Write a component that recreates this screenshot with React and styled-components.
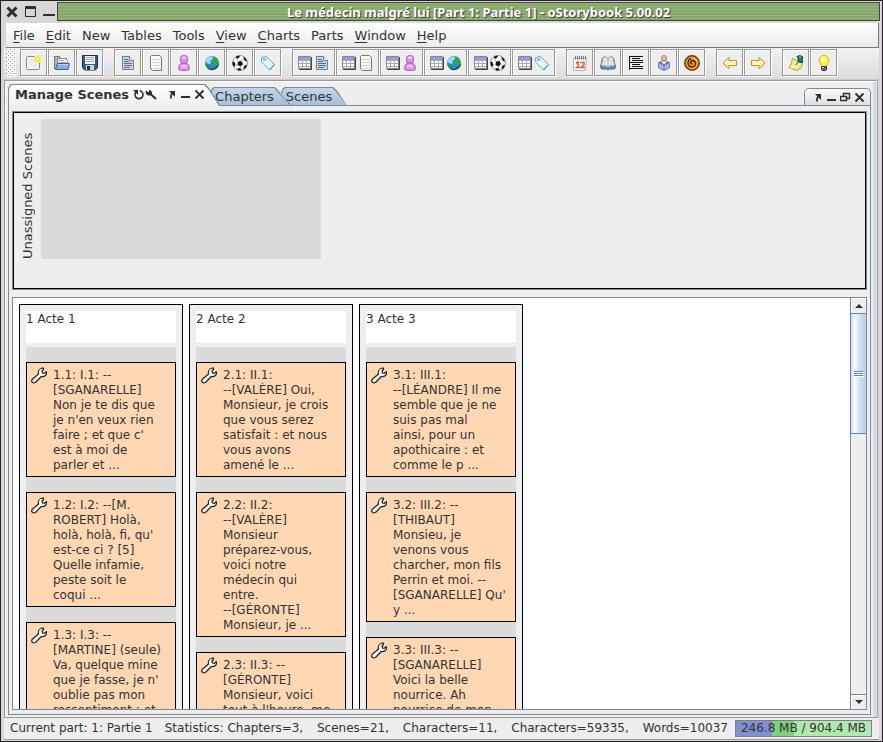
import React from "react";
import styled, { createGlobalStyle } from "styled-components";

const GlobalStyle = createGlobalStyle`
  * { box-sizing: border-box; }
  body { margin: 0; background: #d6d6d6; }
  body, button { font-family: "DejaVu Sans", sans-serif; font-size: 13px; line-height: 15px; color: #333; }
  button { margin: 0; padding: 0; border: 0; background: none; }
  h2 { margin: 0; }
  svg { display: block; flex: none; }
`;

const EDGE = "#7a8a99";

const Frame = styled.div`
  height: 100vh;
  display: flex;
  flex-direction: column;
  border: 1px solid #231f24;
  padding: 1px 3px 1px 3px;
  background: #d8d6d8;
  overflow: hidden;
`;
const TitleBar = styled.header`
  flex: none;
  display: flex;
  height: 19px;
  gap: 2px;
  margin-right: -1px;
`;
const WindowButtons = styled.div`
  display: flex;
  align-items: center;
  width: 51px;
  gap: 7px;
  padding-left: 2px;
`;
const Title = styled.h1`
  flex: 1;
  margin: 0;
  padding-left: 20px;
  border: 1px solid #3c4a30;
  background: repeating-linear-gradient(#96b67a 0 1px, #87a66d 1px 3px);
  color: #fff;
  font: bold 13px/18px "Noto Sans", sans-serif;
  text-align: center;
  text-shadow: 1px 1px 1px #333;
  white-space: nowrap;
  overflow: hidden;
`;
const MenuBar = styled.nav`
  flex: none;
  display: flex;
  gap: 11px;
  height: 25px;
  margin: 2px 0 0 2px;
  padding: 4px 0 0 7px;
  background: linear-gradient(#fff, #eaeaea);
  border-bottom: 1px solid #777;
  border-right: 1px solid #777;
`;
const MenuButton = styled.button`
  height: 16px;
  u { text-underline-offset: 2px; text-decoration-thickness: 1px; }
`;
const ToolBar = styled.div`
  flex: none;
  display: flex;
  gap: 11px;
  height: 32px;
  padding: 1px 0 0 2px;
  border-bottom: 1px solid #c8c8c8;
  background: linear-gradient(#f2f2f2, #dcdcdc);
`;
const Grip = styled.div`
  width: 10px;
  margin-right: -7px;
  height: 28px;
  background:
    conic-gradient(from 270deg at 1px 1px, #8a97a5 25%, transparent 0) 0 0 / 4px 4px,
    conic-gradient(from 270deg at 1px 1px, #8a97a5 25%, transparent 0) 2px 2px / 4px 4px,
    #f4f4f4;
`;
const ToolGroup = styled.div`
  display: flex;
  gap: 1px;
`;
const ToolButton = styled.button`
  display: flex;
  align-items: center;
  justify-content: center;
  width: ${(p) => (p.$wide ? 43 : 27)}px;
  height: 27px;
  background: #eee;
  border: 1px solid #999;
  box-shadow: inset 1px 1px #fff, 1px 1px #fff;
`;
const Desk = styled.main`
  flex: 1;
  min-height: 0;
  display: flex;
  flex-direction: column;
  margin: 0 1px 0 0;
  border: 1px solid #999;
  border-right-color: #aaa;
  box-shadow: inset 1px 1px #fff;
  background: linear-gradient(to left, #d3dde6 4px, #eee 4px);
  padding: 3px 6px 2px 3px;
`;
const TabStrip = styled.div`
  flex: none;
  display: flex;
  align-items: flex-end;
  height: 22px;
  margin-bottom: -1px;
`;
const tabShape = (p) =>
  p.$active
    ? "polygon(0 5px, 1px 2px, 3px 0, calc(100% - 15px) 0, calc(100% - 11px) 4px, 100% 100%, 0 100%)"
    : "polygon(0 6px, 2px 1px, 4px 0, calc(100% - 14px) 0, calc(100% - 10px) 4px, 100% 100%, 9px 100%)";
const Tab = styled.div`
  position: relative;
  z-index: ${(p) => p.$order};
  display: flex;
  align-items: center;
  height: ${(p) => (p.$active ? 22 : 19)}px;
  padding: ${(p) => (p.$active ? "0 14px 2px 7px" : "0 15px 0 5px")};
  margin-right: ${(p) => (p.$active ? -10 : -8)}px;
  background: ${EDGE};
  clip-path: ${tabShape};
  &::before {
    content: "";
    position: absolute;
    inset: 1px 1px ${(p) => (p.$active ? 0 : 1)}px 1px;
    background: ${(p) => (p.$active ? "linear-gradient(#fff, #eee)" : "linear-gradient(#bfd6ee, #a9c0d8)")};
    clip-path: ${tabShape};
  }
  > * { position: relative; }
`;
const TabLabel = styled.button`
  font-weight: ${(p) => (p.$active ? "bold" : "normal")};
  white-space: nowrap;
`;
const TabTools = styled.div`
  display: flex;
  align-items: center;
  gap: 2px;
  margin-left: 4px;
`;
const Pair = styled.div`
  display: flex;
  margin-right: 7px;
`;
const PanelTools = styled.div`
  display: flex;
  align-items: center;
  gap: 2px;
  height: 18px;
  margin-left: auto;
  padding: 0 4px 0 7px;
  border: 1px solid ${EDGE};
  border-bottom: 0;
  border-radius: 5px 5px 0 0;
  background: linear-gradient(#fafafa, #ddd);
`;
const Panel = styled.section`
  flex: 1;
  min-height: 0;
  display: flex;
  flex-direction: column;
  gap: 8px;
  padding: 5px 3px 4px;
  border: 1px solid ${EDGE};
  background: #eee;
`;
const Unassigned = styled.section`
  flex: none;
  display: flex;
  align-items: flex-start;
  height: 177px;
  padding: 6px;
  gap: 5px;
  border: 1px solid #000;
  outline: 1px solid ${EDGE};
  margin: 1px 1px 0;
`;
const SideLabel = styled.h2`
  height: 140px;
  width: 16px;
  font-size: 13px;
  font-weight: normal;
  line-height: 16px;
  writing-mode: vertical-rl;
  transform: rotate(180deg);
  white-space: nowrap;
`;
const DropArea = styled.div`
  width: 280px;
  height: 140px;
  background: #dbdbdb;
`;
const ScrollPane = styled.section`
  flex: 1;
  min-height: 0;
  display: flex;
  border: 1px solid ${EDGE};
  background: #fff;
`;
const Board = styled.div`
  flex: 1;
  display: flex;
  align-items: flex-start;
  gap: 6px;
  padding: 6px;
  overflow: hidden;
`;
const Chapter = styled.article`
  flex: none;
  width: 164px;
  padding: 6px;
  border: 1px solid #000;
  background: #eee;
`;
const ChapterTitle = styled.h2`
  height: 32px;
  margin-bottom: 4px;
  background: #fff;
  font-size: 12px;
  font-weight: normal;
  line-height: 16px;
`;
const SceneList = styled.div`
  display: flex;
  flex-direction: column;
  gap: 15px;
  padding: 15px 0;
  background: #dbdbdb;
`;
const Scene = styled.div`
  display: flex;
  align-items: flex-start;
  gap: 6px;
  padding: 4px 4px 3px;
  border: 1px solid #000;
  background: #ffd8b3;
`;
const SceneText = styled.p`
  margin: 0;
  padding-top: 1px;
  font-size: 12px;
  white-space: pre;
`;
const ScrollBar = styled.div`
  width: 16px;
  display: flex;
  flex-direction: column;
  border-left: 1px solid ${EDGE};
  background: #eee;
`;
const ScrollButton = styled.button`
  display: flex;
  align-items: center;
  justify-content: center;
  height: 15px;
  border-top: ${(p) => (p.$down ? `1px solid ${EDGE}` : "0")};
  box-shadow: inset 1px 1px #fff;
`;
const Thumb = styled.div`
  display: flex;
  flex-direction: column;
  align-items: center;
  justify-content: center;
  gap: 1px;
  height: 121px;
  margin-left: -1px;
  border: 1px solid #6382bf;
  border-right: 0;
  background: linear-gradient(to right, #c8ddf2, #fff 25%, #dbe8f3 45%, #b8cfe5);
`;
const Ridge = styled.i`
  width: 9px;
  height: 1px;
  background: #6382bf;
  box-shadow: 1px 1px #fff;
`;
const Track = styled.div`
  flex: 1;
`;
const StatusBar = styled.footer`
  flex: none;
  display: flex;
  align-items: center;
  height: 22px;
  padding: 0 7px 0 6px;
  background: #eee;
  border-bottom: 1px solid #999;
  font-size: 12px;
  white-space: nowrap;
`;
const Statistics = styled.div`
  display: flex;
  flex: 1;
  justify-content: space-between;
  margin: 0 7px 0 12px;
`;
const Memory = styled.div`
  flex: none;
  width: 137px;
  height: 17px;
  border: 1px solid #808080;
  background: linear-gradient(to right, #8090d0 27%, #80d080 27% 43%, #b0e8b0 43%);
  font-size: 12px;
  text-align: center;
`;

const ink = "#2e2e2e";
const S = ({ w = 16, h = 16, children }) => (
  <svg width={w} height={h} viewBox={`0 0 ${w} ${h}`} fill="none" aria-hidden="true">{children}</svg>
);

const icons = {
  new: (
    <>
      <rect x="0.5" y="1.5" width="13" height="13" rx="1" fill="#f5f5f5" stroke="#8a8a8a" />
      <path d="M3 4h8v8H3z" fill="#ececec" />
      <circle cx="12" cy="4" r="4" fill="#f6f08a" />
      <circle cx="12" cy="4" r="2.6" fill="#f4e926" />
      <circle cx="12" cy="4" r="1" fill="#fff" />
    </>
  ),
  open: (
    <>
      <path d="M0.500 1.500h5l1 2h6v10h-12z" fill="#b5b8b3" stroke="#73766f" />
      <path d="M3.500 3.500h8l2 2v5h-10z" fill="#f7f7f7" stroke="#888" />
      <path d="M5 5.500h5M5 7.500h7" stroke="#aaa" />
      <path d="M3.500 8.500h12l-1.500 6H1.500z" fill="#87aede" stroke="#3465a4" />
      <path d="M4.500 9.500h9.500" stroke="#c0d8f2" />
    </>
  ),
  save: (
    <>
      <path d="M0.500 0.500h15v12l-2 2.500h-11l-2-2.500z" fill="#2f5f86" stroke="#143650" />
      <path d="M3 1h10v8H3z" fill="#f2f2f2" />
      <path d="M4 2.500h8M4 4.500h8M4 6.500h8" stroke="#aaa" />
      <path d="M4 10h8v5H4z" fill="#c9d2d8" />
      <path d="M5 11h3v4H5z" fill="#20313d" />
    </>
  ),
  scene: (
    <>
      <path d="M2.500 1.500h7l4 4v9h-11z" fill="#ccd6e0" stroke="#71808f" />
      <path d="M9.500 1.500v4h4" fill="#f7f9fb" stroke="#71808f" />
      <path d="M4 4.500h4M4 6.500h5M4 8.500h8M4 10.500h8M4 12.500h6" stroke="#5a6e83" />
    </>
  ),
  page: (
    <>
      <path d="M3.500 0.500h8l2 2v13h-9l-2-2v-12z" fill="#f8f8f6" stroke="#777" strokeLinejoin="round" />
      <path d="M4 4.500h8M4 7.500h8M4 10.500h8M5 13.500h7" stroke="#d2d2d0" />
    </>
  ),
  person: (
    <>
      <path d="M4.500 2.500q0-2 3.500-2t3.500 2v3.500q0 1.200-1.500 2 3.500 1 3.500 5 0 2.500-2 2.500h-7q-2 0-2-2.500 0-4 3.500-5-1.500-.8-1.500-2z" fill="#d792dc" stroke="#b569bd" />
      <ellipse cx="8" cy="2.800" rx="2.500" ry="1.400" fill="#ecc5ef" />
      <path d="M5.500 8h5" stroke="#a64fb0" />
      <path d="M4.500 12.500q.5-3 3.500-3t3.500 3" fill="#ebc0ee" />
    </>
  ),
  globe: (
    <>
      <circle cx="8" cy="8" r="7" fill="#2f86d8" />
      <path d="M2.500 4c2-2 4-3 7-2L8 5 6 6l1 2-2 1-3.500-2z" fill="#9be0f5" />
      <path d="M9 3l4 .500 1.500 4-2 4-2-1-1-3-2-1z" fill="#39a935" />
      <path d="M1.500 9l4 1 1 3-1 1.500c-2-1-4-3-4-5.500z" fill="#2c9030" />
      <path d="M15 8a7 7 0 0 1-12 5C7 15 12 13 15 8z" fill="#174d7a" />
    </>
  ),
  ball: (
    <>
      <circle cx="8" cy="8" r="7.500" fill="#fafafa" stroke="#999" />
      <path d="M6 6.500l3.500-.5 1.500 3-2.500 2.500L5.500 10zM3.500 2l3-1.500 1.500 1-2.500 2.500zM11 2l2.500 1L15 6.500 13 6zM.5 7l1.500-.5 1.500 3L2.500 12 .7 10zM5 13.500l3.500-.5 1 2-3 .7zM12 11l3-1.500-1 3.500-2.500 1.500z" fill="#111" />
      <path d="M6 6.500L4.500 4M9.500 6L12 4.500M11 9l2 2M5.500 10l-2 0M8.500 11.500v2" stroke="#bbb" />
    </>
  ),
  tag: (
    <>
      <path d="M1.500 2.500l5-1 8 8-5 5.500-8-8z" fill="#dff1fa" stroke="#5cb5e0" strokeLinejoin="round" />
      <path d="M3 6l7 7 1-1-7-7z" fill="#fff" />
      <path d="M9.500 15l5-5.500" stroke="#1685bd" />
      <circle cx="4.500" cy="4.500" r="1.200" fill="#fff" stroke="#45a7d9" />
    </>
  ),
  table: (
    <>
      <path d="M1.500 2.500h12v12h-12z" fill="#333" stroke="#444" />
      <path d="M0.500 1.500h12v12h-12z" fill="#fff" stroke="#888" />
      <path d="M1 2h11v3H1z" fill="#8c98f4" />
      <path d="M1 5.500h11M1 8.500h11M1 11.500h11M4.500 2v11M8.500 2v11" stroke="#aaa" />
    </>
  ),
  calendar: (
    <>
      <path d="M1.500 3.500h13l-1 12h-12z" fill="#f6f6fc" stroke="#b4b4d4" />
      <path d="M3.500 1v3.500M5.500 1v3.500M7.500 1v3.500M9.500 1v3.500M11.500 1v3.500M13.500 1v3.500" stroke="#777" />
      <path d="M4 8l2-1v5.500M3.500 12.500h4M8.500 7.500h3.500v2L9 12.500h4" stroke="#ed5b20" strokeWidth="1.500" />
    </>
  ),
  book: (
    <>
      <path d="M0.500 12l2-9 5.500 7 5.500-7 2 9-1 2h-5l-1.500 1-1.500-1h-5z" fill="#5c8fd0" stroke="#3d6595" />
      <path d="M8 3.500C6 1.500 4 1.500 3 2.500l-2 9c2-1 5-1 7 1 2-2 5-2 7-1l-2-9c-1-1-3-1-5 1z" fill="#f5f5f5" stroke="#888" />
      <path d="M8 3.500v9" stroke="#999" />
      <path d="M5.500 4l-1 6M10.500 4l1 6" stroke="#d5d5d5" strokeWidth="2" />
    </>
  ),
  list: (
    <path d="M1.500 1v14M1 1.500h14M4 3.500h8M4 5.500h11M1 7.500h14M4 9.500h8M4 11.500h11M1 13.500h14" stroke="#111" />
  ),
  reader: (
    <>
      <path d="M3 8q0-2.500 5-2.500T13 8v3H3z" fill="#6c6c70" />
      <circle cx="8" cy="3" r="2.500" fill="#e5bf95" stroke="#b08455" />
      <path d="M2.500 7.500L8 10.500l5.500-3v5.500L8 15.500l-5.500-2.500z" fill="#a9b2ee" stroke="#7680c8" />
      <path d="M5 6.500l3 3 3-3" fill="#fff" />
      <path d="M8 10.500v4.500" stroke="#5d66b0" />
    </>
  ),
  spiral: (
    <>
      <circle cx="8" cy="8" r="7.200" fill="#f99a2c" stroke="#5b4022" strokeWidth="1.500" />
      <path d="M8.500 8.500Q7 9.500 6.500 8 6.500 5.500 9 5.500q3 .5 2.500 3.500-.5 3-4 3Q4 11.500 4 8q0-3.500 3-4.700" stroke="#4a2608" strokeWidth="1.300" />
      <path d="M9 3q3 .5 4 3.500" stroke="#ffd78c" />
    </>
  ),
  left: <path d="M1 8l6-5.500v3h7.500v5H7v3z" fill="#fff3c4" stroke="#c88a1c" />,
  right: <path d="M15 8L9 2.500v3H1.500v5H9v3z" fill="#fff3c4" stroke="#c88a1c" />,
  note: (
    <>
      <path d="M4.500 3.500l10 4-1 5-4.500 3-8-3c2-2 2.500-5 3.500-9z" fill="#eaee7c" stroke="#a7a646" />
      <path d="M3 12.500c5 0 7-2 9-5" stroke="#f8fac0" strokeWidth="2" />
      <path d="M9 1.500q3-2 6 .5L14 5l1 2-3 .700-2.500-1.700L10.500 4z" fill="#23767d" stroke="#10494f" />
      <path d="M8 10l2.500-3.500" stroke="#444" />
      <path d="M11 2h2" stroke="#8fd0d4" />
    </>
  ),
  bulb: (
    <>
      <path d="M8 0.500c-3 0-5 2-5 4.700 0 3 2.500 3.800 2.500 6.300h5c0-2.500 2.500-3.300 2.500-6.300 0-2.700-2-4.700-5-4.700z" fill="#fbf33d" stroke="#c9bb2a" />
      <ellipse cx="6.800" cy="4.500" rx="2" ry="2.800" fill="#fffde0" />
      <path d="M5.500 11.500h5v2.500l-1 1.500h-3l-1-1.500z" fill="#666" stroke="#333" />
      <path d="M6 12.500h2" stroke="#ddd" />
    </>
  ),
};

const Icon = ({ name }) => <S>{icons[name]}</S>;

const Wrench = () => (
  <S w={16} h={17}>
    <path
      d="M1 12.500L7.500 7c-.6-2.600.8-5.300 3.500-6l1.500.2v1.300l-1.500 1.500.5 2 2 .3 1.700-1.600.6.5C15.600 8.300 13.500 10 10.300 9.500L4.500 15.500 2.500 16 .6 14.500z"
      fill="#f4f4f4"
      stroke="#222"
      strokeWidth="1.200"
      strokeLinejoin="round"
    />
  </S>
);

const glyphs = {
  refresh: (
    <>
      <path d="M3.500 2.500a4 4 0 1 0 5 0L7 1.500" stroke={ink} strokeWidth="1.600" />
      <path d="M0 1h5v5z" fill={ink} />
    </>
  ),
  tool: (
    <>
      <path d="M1 1l1.500 2L4 3 4 1h1l2 2v2L5.500 6.500h-3L.5 4z" fill={ink} />
      <path d="M5 4.500l6 5.500" stroke={ink} strokeWidth="2" />
    </>
  ),
  undock: (
    <>
      <path d="M3 2h6v6z" fill={ink} />
      <path d="M7.500 3.500Q4.500 5 5 9.500" stroke={ink} strokeWidth="1.800" />
    </>
  ),
  min: <path d="M1 8h9" stroke={ink} strokeWidth="2" />,
  restore: <path d="M3.500 4V1.500h6v5H7M3 1.500h7M0.500 4.500h6v4h-6zM0 4.500h7" stroke={ink} strokeWidth="1.400" />,
  close: <path d="M1.500 1.500l8 8M9.500 1.500l-8 8" stroke={ink} strokeWidth="1.800" />,
};
const Glyph = ({ name, label }) => (
  <button aria-label={label}>
    <S w={12} h={11}>{glyphs[name]}</S>
  </button>
);

const menus = ["_File", "_Edit", "New", "Tables", "Tools", "_View", "_Charts", "Parts", "_Window", "_Help"];

const toolGroups = [
  [["new"], ["open"], ["save"]],
  [["scene"], ["page"], ["person"], ["globe"], ["ball"], ["tag"]],
  ["scene", "page", "person", "globe", "ball", "tag"].map((n) => ["table", n]),
  [["calendar"], ["book"], ["list"], ["reader"], ["spiral"]],
  [["left"], ["right"]],
  [["note"], ["bulb"]],
];

const statistics = ["Statistics: Chapters=3,", "Scenes=21,", "Characters=11,", "Characters=59335,", "Words=10037"];

const chapters = [
  {
    title: "1 Acte 1",
    scenes: [
      "1.1: I.1: --\n[SGANARELLE]\nNon je te dis que\nje n'en veux rien\nfaire ; et que c'\nest à moi de\nparler et ...",
      "1.2: I.2: --[M.\nROBERT] Holà,\nholà, holà, fi, qu'\nest-ce ci ? [5]\nQuelle infamie,\npeste soit le\ncoqui ...",
      "1.3: I.3: --\n[MARTINE] (seule)\nVa, quelque mine\nque je fasse, je n'\noublie pas mon\nressentiment ; et",
    ],
  },
  {
    title: "2 Acte 2",
    scenes: [
      "2.1: II.1:\n--[VALÈRE] Oui,\nMonsieur, je crois\nque vous serez\nsatisfait : et nous\nvous avons\namené le ...",
      "2.2: II.2:\n--[VALÈRE]\nMonsieur\npréparez-vous,\nvoici notre\nmédecin qui\nentre.\n--[GÉRONTE]\nMonsieur, je ...",
      "2.3: II.3: --\n[GÉRONTE]\nMonsieur, voici\ntout à l'heure, me",
    ],
  },
  {
    title: "3 Acte 3",
    scenes: [
      "3.1: III.1:\n--[LÉANDRE] Il me\nsemble que je ne\nsuis pas mal\nainsi, pour un\napothicaire : et\ncomme le p ...",
      "3.2: III.2: --\n[THIBAUT]\nMonsieu, je\nvenons vous\ncharcher, mon fils\nPerrin et moi. --\n[SGANARELLE] Qu'\ny ...",
      "3.3: III.3: --\n[SGANARELLE]\nVoici la belle\nnourrice. Ah\nnourrice de mon",
    ],
  },
];

export default function App() {
  return (
    <Frame>
      <GlobalStyle />
      <TitleBar>
        <WindowButtons>
          <button aria-label="Close window">
            <S w={12} h={12}><path d="M1.500 1.500l9 9M10.500 1.500l-9 9" stroke={ink} strokeWidth="3" /></S>
          </button>
          <button aria-label="Maximize window">
            <S w={11} h={11}><path d="M0.500 0.500h10v10h-10z" stroke={ink} /><path d="M0 2h11" stroke={ink} strokeWidth="2" /></S>
          </button>
          <button aria-label="Minimize window">
            <S w={12} h={12}><path d="M0 9h12" stroke={ink} strokeWidth="2" /></S>
          </button>
        </WindowButtons>
        <Title>Le médecin malgré lui [Part 1: Partie 1] - oStorybook 5.00.02</Title>
      </TitleBar>
      <MenuBar>
        {menus.map((m) =>
          m[0] === "_" ? (
            <MenuButton key={m}><u>{m[1]}</u>{m.slice(2)}</MenuButton>
          ) : (
            <MenuButton key={m}>{m}</MenuButton>
          )
        )}
      </MenuBar>
      <ToolBar>
        <Grip />
        {toolGroups.map((group, i) => (
          <ToolGroup key={i}>
            {group.map((names) => (
              <ToolButton key={names.join()} $wide={names.length > 1} aria-label={names.join(" ")}>
                {names.map((n) => <Icon key={n} name={n} />)}
              </ToolButton>
            ))}
          </ToolGroup>
        ))}
      </ToolBar>
      <Desk>
        <TabStrip>
          <Tab $active $order={3}>
            <TabLabel $active>Manage Scenes</TabLabel>
            <TabTools>
              <Pair>
                <Glyph name="refresh" label="Refresh" />
                <Glyph name="tool" label="Options" />
              </Pair>
              <Glyph name="undock" label="Undock" />
              <Glyph name="min" label="Minimize" />
              <Glyph name="close" label="Close" />
            </TabTools>
          </Tab>
          <Tab $order={2}><TabLabel>Chapters</TabLabel></Tab>
          <Tab $order={1}><TabLabel>Scenes</TabLabel></Tab>
          <PanelTools>
            <Glyph name="undock" label="Undock panel" />
            <Glyph name="min" label="Minimize panel" />
            <Glyph name="restore" label="Restore panel" />
            <Glyph name="close" label="Close panel" />
          </PanelTools>
        </TabStrip>
        <Panel>
          <Unassigned>
            <SideLabel>Unassigned Scenes</SideLabel>
            <DropArea />
          </Unassigned>
          <ScrollPane>
            <Board>
              {chapters.map((c) => (
                <Chapter key={c.title}>
                  <ChapterTitle>{c.title}</ChapterTitle>
                  <SceneList>
                    {c.scenes.map((text) => (
                      <Scene key={text}>
                        <Wrench />
                        <SceneText>{text}</SceneText>
                      </Scene>
                    ))}
                  </SceneList>
                </Chapter>
              ))}
            </Board>
            <ScrollBar>
              <ScrollButton aria-label="Scroll up">
                <S w={8} h={4}><path d="M0 4l4-4 4 4z" fill={ink} /></S>
              </ScrollButton>
              <Thumb><Ridge /><Ridge /><Ridge /></Thumb>
              <Track />
              <ScrollButton $down aria-label="Scroll down">
                <S w={8} h={4}><path d="M0 0l4 4 4-4z" fill={ink} /></S>
              </ScrollButton>
            </ScrollBar>
          </ScrollPane>
        </Panel>
      </Desk>
      <StatusBar>
        <span>Current part: 1: Partie 1</span>
        <Statistics>
          {statistics.map((s) => <span key={s}>{s}</span>)}
        </Statistics>
        <Memory>246.8 MB / 904.4 MB</Memory>
      </StatusBar>
    </Frame>
  );
}
